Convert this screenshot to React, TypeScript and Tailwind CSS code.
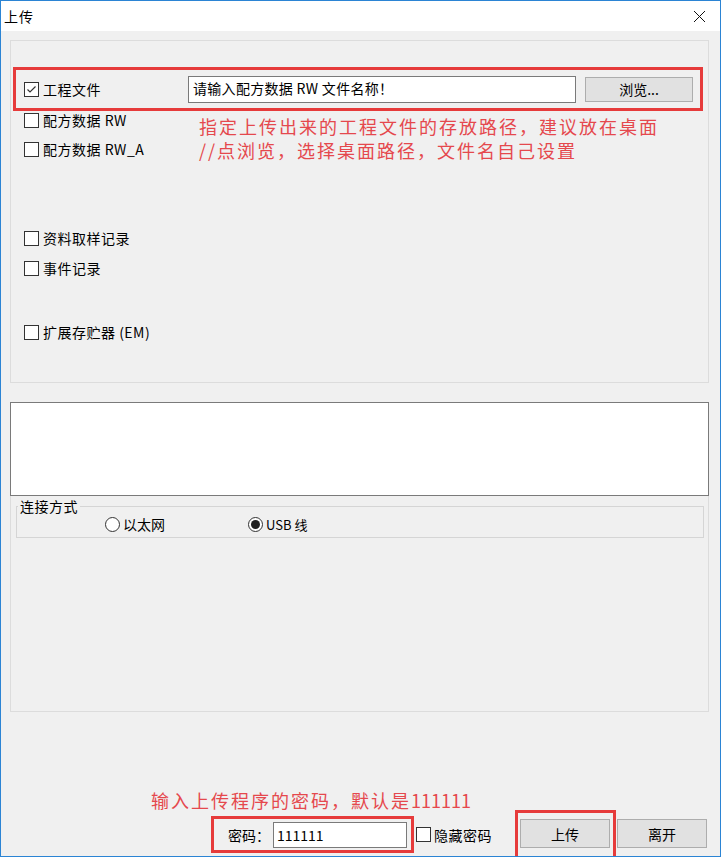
import React from 'react';

const CheckBox = ({ checked }: { checked?: boolean }) => (
  <span className="flex h-[15px] w-[15px] shrink-0 items-center justify-center border border-[#333333] bg-white">
    {checked && (
      <svg width="11" height="11" viewBox="0 0 11 11">
        <polyline points="1.5,5.5 4,8 9.5,2.5" fill="none" stroke="#333333" strokeWidth="1.2" />
      </svg>
    )}
  </span>
);

const Radio = ({ checked }: { checked?: boolean }) => (
  <span className="flex h-[15px] w-[15px] shrink-0 items-center justify-center rounded-full border border-[#333333] bg-white">
    {checked && <span className="h-[9px] w-[9px] rounded-full bg-[#222222]" />}
  </span>
);

const CheckRow = ({ label, checked, className = '' }: { label: string; checked?: boolean; className?: string }) => (
  <div className={`flex h-[18px] items-center gap-[4px] ${className}`}>
    <CheckBox checked={checked} />
    <span className="whitespace-nowrap text-[14px] leading-none tracking-[0.5px] text-black">{label}</span>
  </div>
);

export default function App() {
  return (
    <div className="box-border flex h-[857px] w-[721px] flex-col overflow-hidden border border-[#2b84d4] bg-[#f0f0f0] font-['Noto_Sans_CJK_SC','Noto_Sans',sans-serif] text-black">
      {/* title bar */}
      <div className="flex h-[30px] shrink-0 items-center justify-between bg-white pl-[3px] pr-[14px]">
        <span className="text-[14px] leading-none tracking-[1px]">上传</span>
        <svg width="13" height="13" viewBox="0 0 13 13">
          <path d="M1 1 L12 12 M12 1 L1 12" stroke="#111111" strokeWidth="1" fill="none" />
        </svg>
      </div>

      <div className="flex flex-1 flex-col pl-[9px] pr-[11px]">
        {/* upload items panel */}
        <div className="mt-[9px] flex h-[343px] flex-col border border-[#dcdcdc]">
          <div className="ml-[2px] mt-[26px] flex h-[44px] w-[690px] items-center border-[3px] border-[#e63b3b] pl-[8px]">
            <CheckBox checked />
            <span className="ml-[4px] w-[145px] whitespace-nowrap text-[14px] leading-none tracking-[0.5px]">工程文件</span>
            <div className="h-[27px] w-[388px] border border-[#7a7a7a] bg-white px-[4px] pt-[2px] text-[14px] leading-[18px] tracking-[0.3px]">
              请输入配方数据 RW 文件名称！
            </div>
            <button className="ml-[9px] h-[25px] w-[108px] border border-[#adadad] bg-[#e1e1e1] text-[14px] leading-none">
              浏览...
            </button>
          </div>

          <div className="flex">
            <div className="flex w-[188px] flex-col pl-[13px]">
              <CheckRow label="配方数据 RW" />
              <CheckRow label="配方数据 RW_A" className="mt-[11px]" />
              <CheckRow label="资料取样记录" className="mt-[71px]" />
              <CheckRow label="事件记录" className="mt-[12px]" />
              <CheckRow label="扩展存贮器 (EM)" className="mt-[46px]" />
            </div>
            <div className="mt-[3px] text-[18px] leading-[24px] tracking-[2px] text-[#e5484d]">
              <div>指定上传出来的工程文件的存放路径，建议放在桌面</div>
              <div>//点浏览，选择桌面路径，文件名自己设置</div>
            </div>
          </div>
        </div>

        {/* log box */}
        <div className="mt-[19px] h-[94px] border border-[#7a7a7a] bg-white" />

        {/* connection panel */}
        <div className="h-[216px] border border-t-0 border-[#dcdcdc]">
          <fieldset className="ml-[5px] mr-[4px] h-[42px] border border-[#d5d5d5] px-0 pb-0">
            <legend className="ml-[1px] px-[2px] text-[14px] leading-[20px] tracking-[0.5px]">连接方式</legend>
            <div className="-mt-[2px] flex h-[20px] items-center pl-[88px]">
              <div className="flex w-[143px] items-center gap-[3px]">
                <Radio />
                <span className="text-[14px] leading-none">以太网</span>
              </div>
              <div className="flex items-center gap-[3px]">
                <Radio checked />
                <span className="text-[13px] leading-none">USB 线</span>
              </div>
            </div>
          </fieldset>
        </div>

        {/* bottom area */}
        <div className="mt-[78px] h-[20px] pl-[141px] text-[18px] leading-[20px] tracking-[2px] text-[#e5484d]">
          输入上传程序的密码，默认是<span className="tracking-[0px]">111111</span>
        </div>
        <div className="flex h-[46px] items-end">
          <div className="mb-[3px] ml-[201px] flex h-[37px] w-[203px] items-center border-[3px] border-[#e63b3b] pl-[14px]">
            <span className="w-[45px] whitespace-nowrap text-[14px] leading-none">密码：</span>
            <div className="flex h-[26px] w-[134px] items-center border border-[#7a7a7a] bg-white pl-[3px] text-[14px] leading-none">
              111111
            </div>
          </div>
          <div className="mb-[3px] ml-[2px] flex h-[37px] w-[99px] items-center gap-[3px]">
            <CheckBox />
            <span className="whitespace-nowrap text-[14px] leading-none tracking-[0.5px]">隐藏密码</span>
          </div>
          <div className="h-[46px] w-[101px] border-[3px] border-b-0 border-[#e63b3b] pl-[2px] pt-[6px]">
            <button className="h-[29px] w-[90px] border border-[#adadad] bg-[#e1e1e1] text-[14px] leading-none">上传</button>
          </div>
          <button className="mb-[8px] ml-[1px] h-[29px] w-[90px] border border-[#adadad] bg-[#e1e1e1] text-[14px] leading-none">
            离开
          </button>
        </div>
      </div>
    </div>
  );
}
